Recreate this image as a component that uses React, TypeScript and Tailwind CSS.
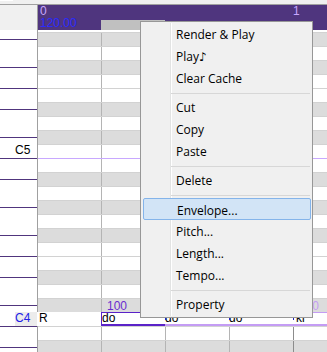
import React from 'react';

const narrow = { fontFamily: '"Liberation Sans Narrow", "Liberation Sans", Arial, sans-serif' };

const keys = [
  { h: 'h-[10px]' },
  { h: 'h-[28px]' },
  { h: 'h-[21px]' },
  { h: 'h-[21px]' },
  { h: 'h-[28px]' },
  { h: 'h-[21px]', label: 'C5' },
  { h: 'h-[21px]' },
  { h: 'h-[28px]' },
  { h: 'h-[28px]' },
  { h: 'h-[21px]' },
  { h: 'h-[21px]' },
  { h: 'h-[28px]' },
  { h: 'h-[21px]', label: 'C4', current: true },
  { h: 'h-[21px]' },
  { h: 'h-[21px]' },
];

const blackRows = new Set([0, 2, 5, 7, 10, 12, 14, 17, 19, 22]);

type Item = { label: string } | 'sep';

const menu: Item[] = [
  { label: 'Render & Play' },
  { label: 'Play♪' },
  { label: 'Clear Cache' },
  'sep',
  { label: 'Cut' },
  { label: 'Copy' },
  { label: 'Paste' },
  'sep',
  { label: 'Delete' },
  'sep',
  { label: 'Envelope...' },
  { label: 'Pitch...' },
  { label: 'Length...' },
  { label: 'Tempo...' },
  'sep',
  { label: 'Property' },
];

const Marker = () => (
  <span className="absolute -left-[2px] top-[4px] flex flex-col items-center">
    <span className="block w-[5px] h-px bg-[#2020c0]" />
    <span className="block w-px h-[2px] bg-[#2020c0]" />
  </span>
);

const NoteRow = () => (
  <div className="flex h-[14px] bg-white text-[12px] leading-[11px] text-black" style={narrow}>
    <div className="w-[64px] -ml-px h-[14px] bg-white pl-[2px] pt-px">R</div>
    <div className="w-[64px] h-[14px] bg-white border-l border-t border-b-2 border-[#5a22c8]">do</div>
    <div className="relative w-[64px] h-[14px] bg-white border-t border-b-2 border-[#c49cf4]">
      <Marker />
      do
    </div>
    <div className="relative w-[64px] h-[14px] bg-white border-t border-b-2 border-[#c49cf4]">
      <Marker />
      do
    </div>
    <div className="relative flex-1 h-[14px] bg-white border-t border-b-2 border-[#c49cf4] pl-[3px]">
      <Marker />
      ki
    </div>
  </div>
);

const GridRow = ({ i }: { i: number }) => {
  if (i === 20) return <NoteRow />;
  const bg = blackRows.has(i) ? 'bg-[#dcdcdc]' : 'bg-white';
  const line = i === 9 ? 'border-[#c8a8ff]' : 'border-[#d2d2d2]';
  const vel = i === 19;
  return (
    <div className={`flex h-[14px] border-t ${line} ${bg} text-[12px] leading-[11px]`} style={narrow}>
      <div className="w-[63px]" />
      <div className="w-[64px] border-l border-[#b4b4b4] pl-[5px] pt-[2px] text-[#6a2cd0]">{vel ? '100' : ''}</div>
      <div className="w-[64px] border-l border-[#b4b4b4]" />
      <div className="w-[64px] border-l border-[#b4b4b4]" />
      <div className="flex-1 border-l border-[#8c8c8c] pl-[5px] pt-[2px] text-[#c49cf4]">{vel ? '100' : ''}</div>
    </div>
  );
};

const App: React.FC = () => {
  return (
    <div className="relative w-[327px] h-[352px] overflow-hidden bg-[#f0f0f0]">
      <div className="h-[4px] bg-[#f0f0f0]">
        <div className="w-[13px] h-px bg-white" />
      </div>
      <div className="h-px bg-[#a0a0a0]" />

      <div className="flex">
        {/* piano keys */}
        <div className="w-[37px] shrink-0">
          <div className="h-[25px] bg-[#f0f0f0]" />
          <div className="bg-white">
            {keys.map((k, idx) => (
              <div key={idx} className={`${k.h} border-b border-[#50357d] flex items-end justify-end`}>
                {k.label && (
                  <span
                    className={`h-[14px] w-[22px] pr-[7px] text-right text-[12px] leading-[13px] ${
                      k.current ? 'bg-[#ececec] text-[#2020e8]' : 'text-black'
                    }`}
                    style={narrow}
                  >
                    {k.label}
                  </span>
                )}
              </div>
            ))}
          </div>
        </div>

        {/* roll */}
        <div className="w-[290px] shrink-0 border-l border-[#a0a0a0]">
          <div className="flex h-[25px] bg-[#4f357e] text-[12px]" style={narrow}>
            <div className="w-[63px] pl-[2px] pt-px">
              <div className="h-[11px] leading-[11px] text-[#c8a8ff]">0</div>
              <div className="mt-px h-[11px] leading-[11px] text-[#2a2aff]">120.00</div>
            </div>
            <div className="w-[64px] h-[10px] self-end bg-[#c0c0c0]" />
            <div className="w-[128px]" />
            <div className="flex-1 pt-px h-[12px] leading-[11px] text-[#c8a8ff]">1</div>
          </div>
          <div className="h-[2px] bg-white" />
          {Array.from({ length: 23 }, (_, i) => (
            <GridRow key={i} i={i} />
          ))}
        </div>
      </div>

      {/* context menu */}
      <div
        className="absolute left-[140px] top-[21px] w-[173px] h-[297px] border border-[#979797] bg-[#f0f0f0] pt-px pl-[2px] pr-px text-[12px] text-black"
        style={{ fontFamily: '"Open Sans", "Noto Sans", "DejaVu Sans", sans-serif' }}
      >
        <div className="absolute left-[29px] top-[1px] bottom-[1px] w-px bg-[#e2e3e3]" />
        <div className="absolute left-[30px] top-[1px] bottom-[1px] w-px bg-white" />
        <div className="relative flex flex-col">
          {menu.map((m, idx) =>
            m === 'sep' ? (
              <div key={idx} className="h-[7px] pt-[4px] pl-[28px] pr-px">
                <div className="h-px bg-[#d7d7d7]" />
              </div>
            ) : (
              <div
                key={idx}
                className={`h-[22px] pt-px leading-[22px] pl-[33px] ${
                  m.label === 'Envelope...' ? 'border border-[#84b4ea] bg-[#d2e4f6] rounded-[2px] pl-[32px] leading-[20px]' : ''
                }`}
              >
                {m.label}
              </div>
            )
          )}
        </div>
      </div>
    </div>
  );
};

export default App;
